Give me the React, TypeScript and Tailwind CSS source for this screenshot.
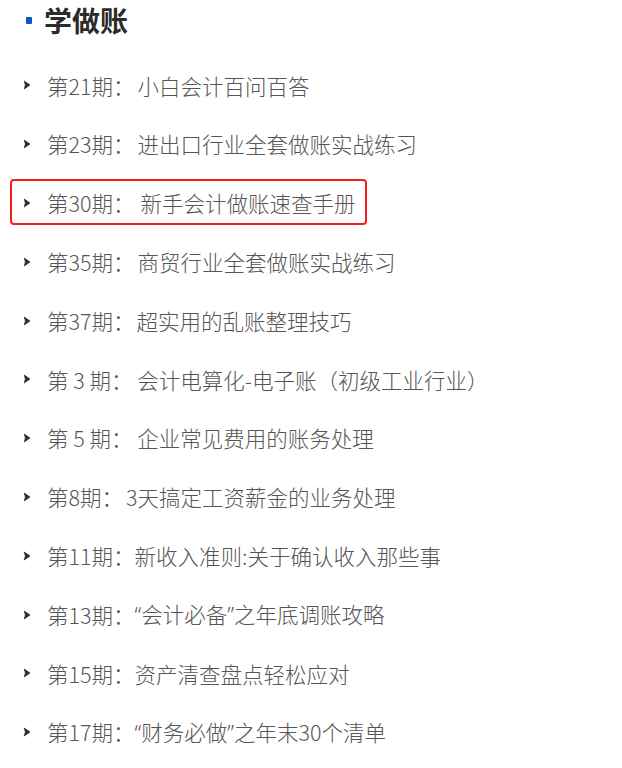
import React from "react";

function Q({ children }: { children: React.ReactNode }) {
  return <span style={{ fontFamily: '"Noto Sans", sans-serif' }}>{children}</span>;
}

type Item = { p: string; t: React.ReactNode; gap: string };

const items: Item[] = [
  { p: "第21期：", t: "小白会计百问百答", gap: "ml-[3px]" },
  { p: "第23期：", t: "进出口行业全套做账实战练习", gap: "ml-[3px]" },
  { p: "第30期：", t: "新手会计做账速查手册", gap: "ml-[6px]" },
  { p: "第35期：", t: "商贸行业全套做账实战练习", gap: "ml-[3px]" },
  { p: "第37期：", t: "超实用的乱账整理技巧", gap: "ml-[2px]" },
  { p: "第 3 期： ", t: "会计电算化-电子账（初级工业行业）", gap: "ml-0" },
  { p: "第 5 期： ", t: "企业常见费用的账务处理", gap: "ml-0" },
  { p: "第8期：", t: "3天搞定工资薪金的业务处理", gap: "ml-[3px]" },
  { p: "第11期：", t: "新收入准则:关于确认收入那些事", gap: "ml-0" },
  {
    p: "第13期：",
    t: (
      <>
        <Q>“</Q>会计必备<Q>”</Q>之年底调账攻略
      </>
    ),
    gap: "ml-0",
  },
  { p: "第15期：", t: "资产清查盘点轻松应对", gap: "ml-0" },
  {
    p: "第17期：",
    t: (
      <>
        <Q>“</Q>财务必做<Q>”</Q>之年末30个清单
      </>
    ),
    gap: "ml-0",
  },
];

function Arrow() {
  return (
    <svg width="8" height="10" viewBox="0 0 8 10" className="shrink-0">
      <path
        d="M1.2 1 L7 5 L1.2 9 L2.4 5 Z"
        fill="#2a2a2a"
        stroke="#2a2a2a"
        strokeWidth="0.7"
        strokeLinejoin="round"
      />
    </svg>
  );
}

export default function App() {
  return (
    <div
      className="w-[622px] h-[768px] bg-white overflow-hidden"
      style={{ fontFamily: '"Noto Sans CJK SC", "Noto Sans", sans-serif' }}
    >
      <div className="flex items-center h-[40px] pl-[26px]">
        <span className="w-[6px] h-[7px] bg-[#0a56c8] rounded-[1px] shrink-0" />
        <span className="ml-[12px] text-[28px] font-bold text-[#2b2b2b] leading-none">
          学做账
        </span>
      </div>
      <ul className="mt-[16px]">
        {items.map((it, i) => (
          <li key={i} className="relative flex items-center h-[58.8px] pl-[23px]">
            {i === 2 && (
              <div className="absolute left-[10px] top-[5px] w-[357px] h-[46px] border-2 border-[#f51c1c] rounded-[4px]" />
            )}
            <Arrow />
            <span className="ml-[16px] flex items-center text-[21.5px] font-light text-[#555555] leading-none whitespace-pre">
              <span>{it.p}</span>
              <span className={it.gap}>{it.t}</span>
            </span>
          </li>
        ))}
      </ul>
    </div>
  );
}
